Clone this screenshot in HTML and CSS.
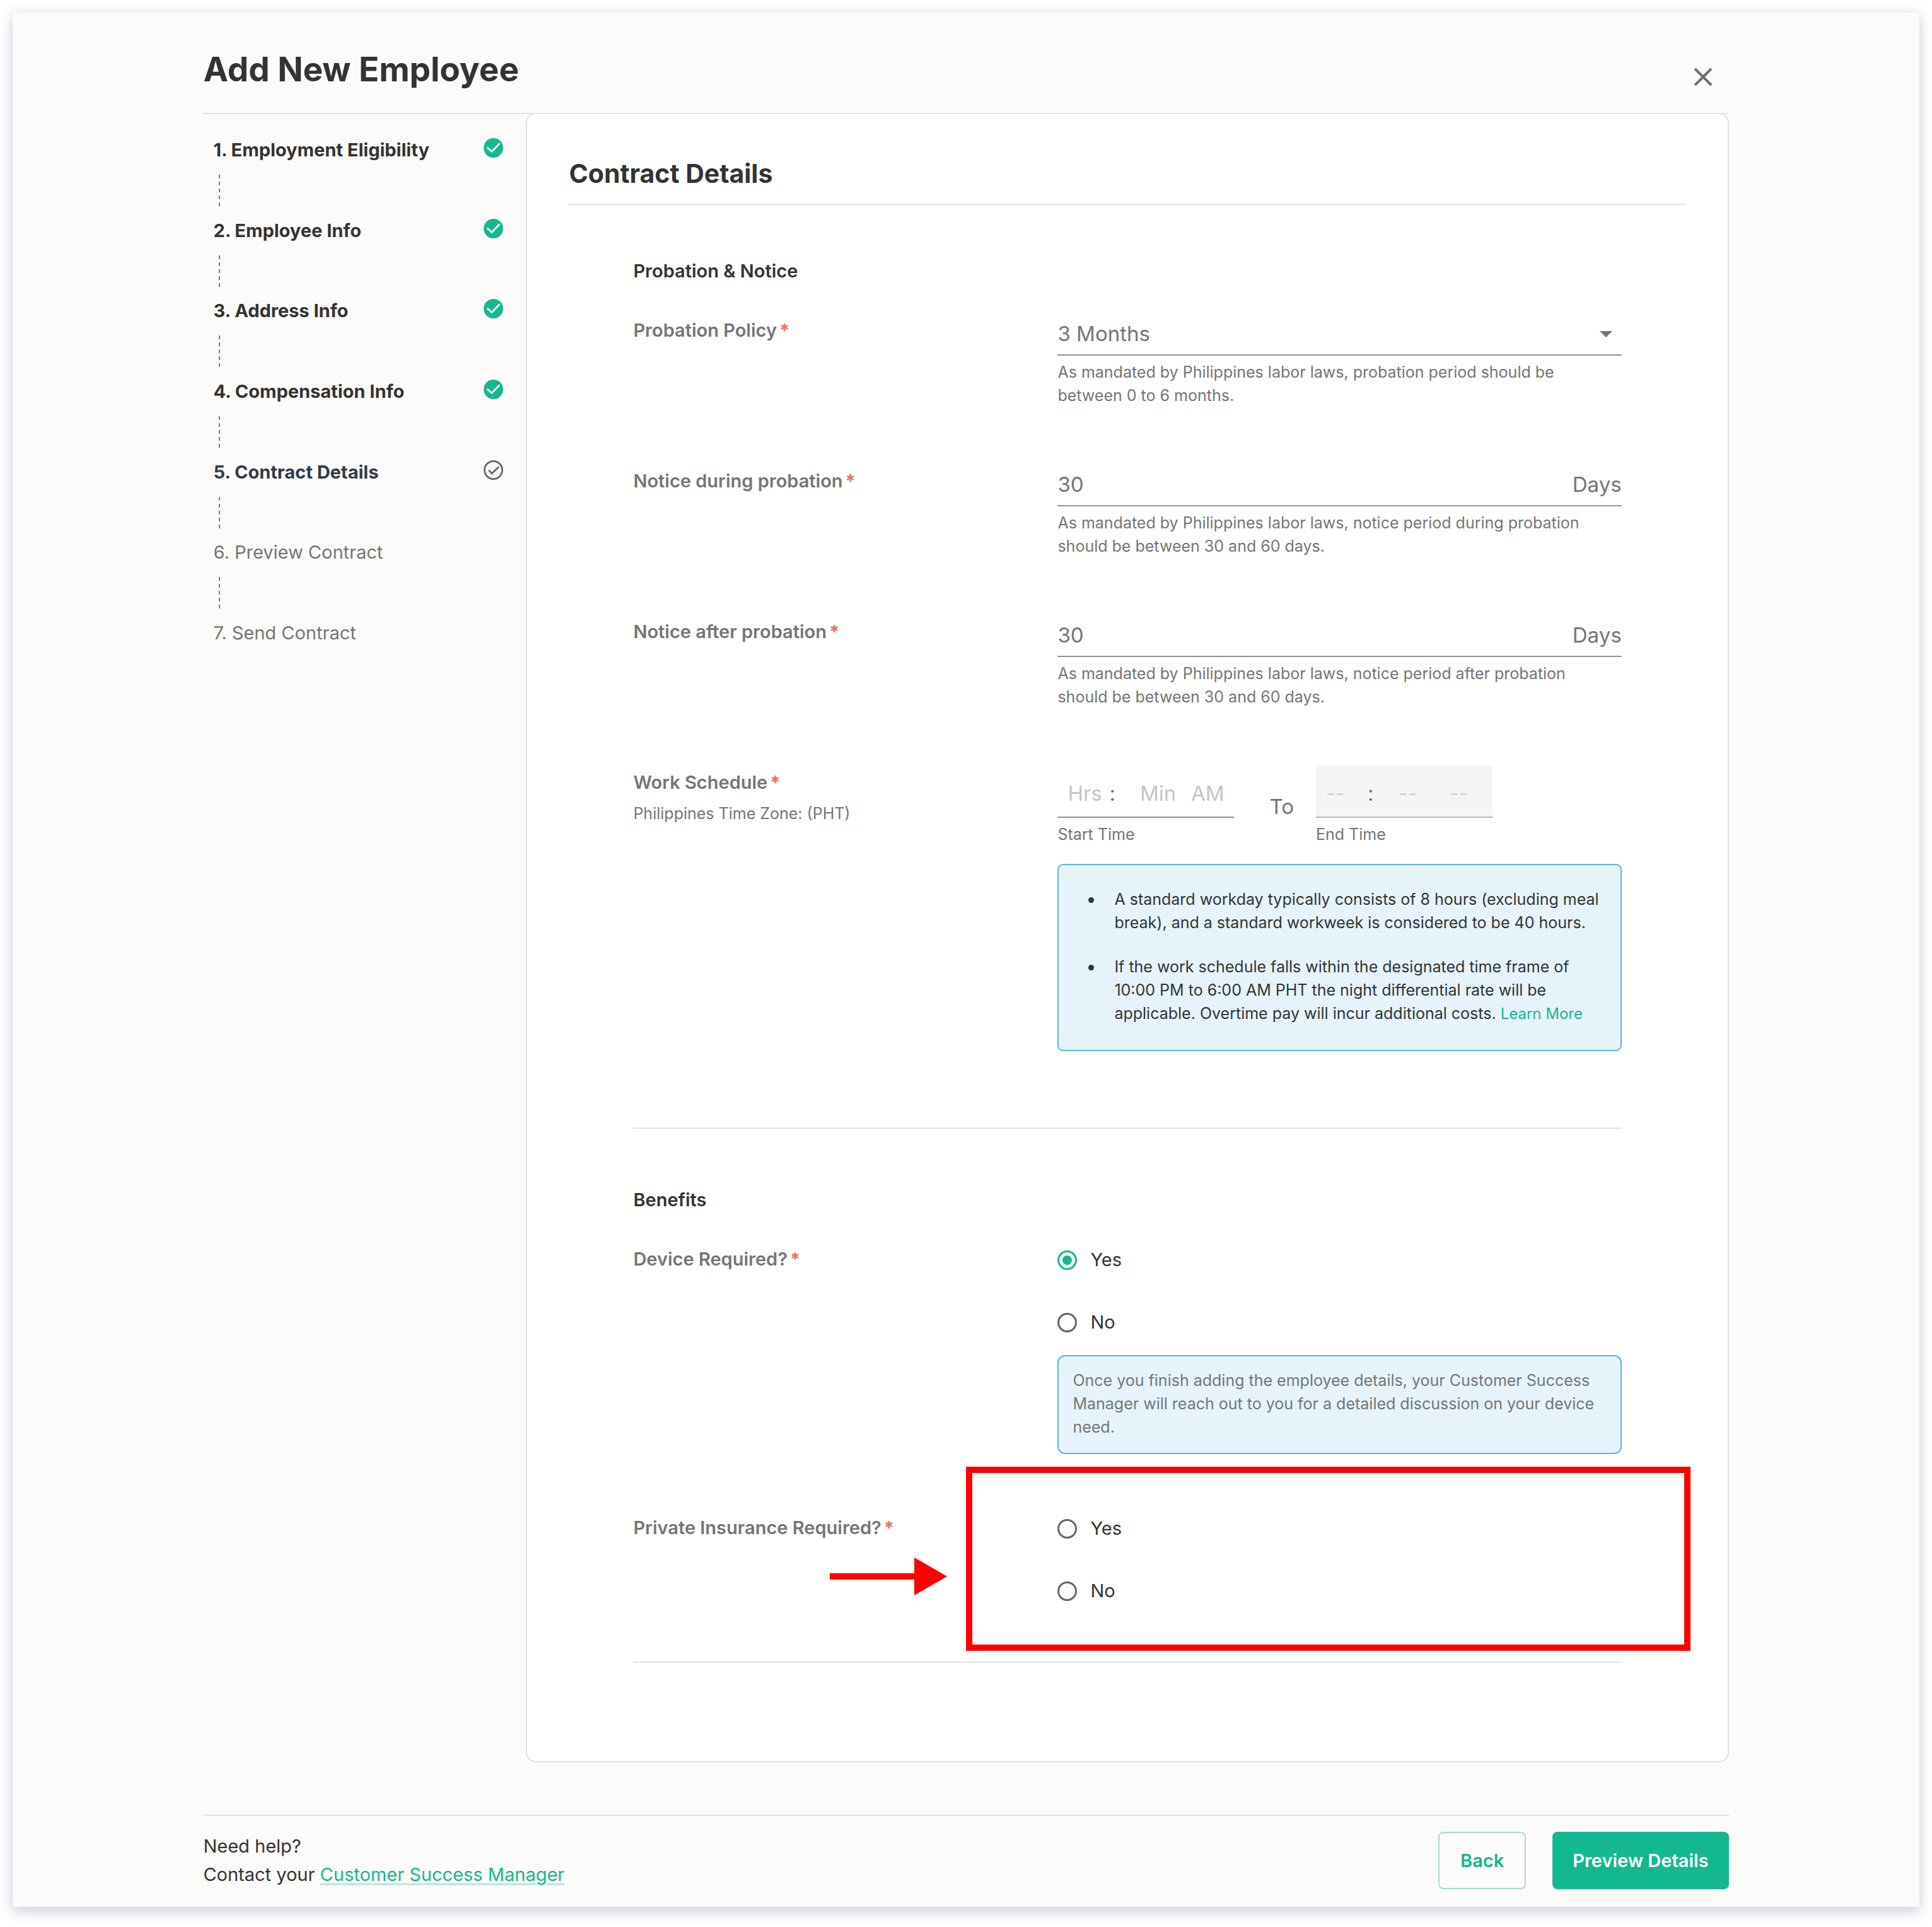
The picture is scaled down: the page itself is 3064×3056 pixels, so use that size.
FILE: index.html
```
<!DOCTYPE html>
<html lang="en">

<head>
  <meta charset="UTF-8" />
  <meta name="viewport" content="width=device-width, initial-scale=1.0" />
  <title>Add New Employee</title>
  <link rel="stylesheet" href="styles.css">
</head>

<body>
  <!-- Shared step icons -->
  <svg class="sprite" aria-hidden="true">
    <symbol id="icon-done" viewBox="0 0 24 24">
      <circle cx="12" cy="12" r="10" fill="currentColor" />
      <path d="M6.2 12.1l4.1 3.7 7.6-7.9" fill="none" stroke="#fff" stroke-width="1.8" stroke-linecap="round" />
    </symbol>
    <symbol id="icon-current" viewBox="0 0 24 24">
      <circle cx="12" cy="12" r="9.1" fill="none" stroke="currentColor" stroke-width="1.8" />
      <path d="M7.7 12.6l2.7 3 6.7-6.6" fill="none" stroke="currentColor" stroke-width="1.8" stroke-linecap="round" />
    </symbol>
  </svg>

  <div class="window">
    <div class="container">
      <header class="header">
        <h1>Add New Employee</h1>
        <button type="button" class="close" aria-label="Close">
          <svg viewBox="0 0 40 40"><path d="M7 7l26 26M33 7L7 33" /></svg>
        </button>
      </header>

      <div class="layout">
        <aside class="sidebar">
          <ol class="steps">
            <li class="done"><div class="step"><span>1. Employment Eligibility</span><svg><use href="#icon-done" /></svg></div></li>
            <li class="done"><div class="step"><span>2. Employee Info</span><svg><use href="#icon-done" /></svg></div></li>
            <li class="done"><div class="step"><span>3. Address Info</span><svg><use href="#icon-done" /></svg></div></li>
            <li class="done"><div class="step"><span>4. Compensation Info</span><svg><use href="#icon-done" /></svg></div></li>
            <li class="current"><div class="step"><span>5. Contract Details</span><svg><use href="#icon-current" /></svg></div></li>
            <li><div class="step"><span>6. Preview Contract</span></div></li>
            <li><div class="step"><span>7. Send Contract</span></div></li>
          </ol>
        </aside>

        <main class="card">
          <h2>Contract Details</h2>

          <form id="contractForm">
            <section>
              <h3>Probation &amp; Notice</h3>

              <div class="row">
                <div class="name">
                  <label for="policy">Probation Policy<span class="req">*</span></label>
                </div>
                <div>
                  <div class="control select">
                    <select id="policy">
                      <option>3 Months</option>
                    </select>
                    <svg viewBox="0 0 20 10"><path d="M0 0h20L10 10z" /></svg>
                  </div>
                  <p class="hint">As mandated by Philippines labor laws, probation period should be between 0 to 6 months.</p>
                </div>
              </div>

              <div class="row">
                <div class="name">
                  <label for="during">Notice during probation<span class="req">*</span></label>
                </div>
                <div>
                  <div class="control">
                    <input type="text" id="during" value="30">
                    <span>Days</span>
                  </div>
                  <p class="hint">As mandated by Philippines labor laws, notice period during probation should be between 30 and 60 days.</p>
                </div>
              </div>

              <div class="row">
                <div class="name">
                  <label for="after">Notice after probation<span class="req">*</span></label>
                </div>
                <div>
                  <div class="control">
                    <input type="text" id="after" value="30">
                    <span>Days</span>
                  </div>
                  <p class="hint">As mandated by Philippines labor laws, notice period after probation should be between 30 and 60 days.</p>
                </div>
              </div>

              <div class="row schedule">
                <div class="name">
                  <label for="startHours">Work Schedule<span class="req">*</span></label>
                  <p class="zone">Philippines Time Zone: (PHT)</p>
                </div>
                <div>
                  <div class="times">
                    <div>
                      <div class="time">
                        <input type="text" id="startHours" class="hours" placeholder="Hrs">
                        <span>:</span>
                        <input type="text" class="minutes" placeholder="Min" aria-label="Start minutes">
                        <input type="text" class="period" placeholder="AM" aria-label="Start period">
                      </div>
                      <p class="hint">Start Time</p>
                    </div>
                    <span class="to">To</span>
                    <div>
                      <div class="time disabled">
                        <input type="text" class="hours" placeholder="--" aria-label="End hours" disabled>
                        <span>:</span>
                        <input type="text" class="minutes" placeholder="--" aria-label="End minutes" disabled>
                        <input type="text" class="period" placeholder="--" aria-label="End period" disabled>
                      </div>
                      <p class="hint">End Time</p>
                    </div>
                  </div>
                  <ul class="info rules">
                    <li><p>A standard workday typically consists of 8 hours (excluding meal break), and a standard workweek is considered to be 40 hours.</p></li>
                    <li><p>If the work schedule falls within the designated time frame of 10:00 PM to 6:00 AM PHT the night differential rate will be applicable. Overtime pay will incur additional costs. <a href="#">Learn More</a></p></li>
                  </ul>
                </div>
              </div>
            </section>

            <section>
              <h3>Benefits</h3>

              <div class="row" role="radiogroup" aria-labelledby="deviceLabel">
                <div class="name" id="deviceLabel">Device Required?<span class="req">*</span></div>
                <div>
                  <div class="radios">
                    <label><input type="radio" name="device" checked> Yes</label>
                    <label><input type="radio" name="device"> No</label>
                  </div>
                  <p class="info">Once you finish adding the employee details, your Customer Success Manager will reach out to you for a detailed discussion on your device need.</p>
                </div>
              </div>

              <div class="row" role="radiogroup" aria-labelledby="insuranceLabel">
                <div class="name" id="insuranceLabel">Private Insurance Required?<span class="req">*</span></div>
                <div class="marked">
                  <div class="radios">
                    <label><input type="radio" name="insurance"> Yes</label>
                    <label><input type="radio" name="insurance"> No</label>
                  </div>
                  <div class="highlight"></div>
                  <svg class="arrow" viewBox="0 0 186 60"><path d="M0 25h134V0l52 30-52 30V35H0z" /></svg>
                </div>
              </div>
            </section>
          </form>
        </main>
      </div>

      <footer class="footer">
        <p>Need help?<br>Contact your <a href="#">Customer Success Manager</a></p>
        <div class="actions">
          <button type="button" class="btn">Back</button>
          <button type="submit" form="contractForm" class="btn primary">Preview Details</button>
        </div>
      </footer>
    </div>
  </div>
</body>

</html>
```
FILE: styles.css
```
:root {
  --green: #14b890;
  --text: #333;
  --muted: #757575;
  --line: #e2e2e2;
  --page: #fcfbf9;
}

* {
  box-sizing: border-box;
}

body {
  margin: 0;
  padding: 20px 20px 32px;
  background: #fff;
  color: var(--text);
  font-family: Inter, Roboto, sans-serif;
  font-size: 29px;
  line-height: 36px;
}

h1, h2, h3, p, ol, ul {
  margin: 0;
  padding: 0;
  list-style: none;
}

p {
  font-weight: 400;
}

a {
  color: var(--green);
  text-decoration: none;
}

input, select, button {
  margin: 0;
  padding: 0;
  border: none;
  background: none;
  color: inherit;
  font: inherit;
}

.sprite {
  display: none;
}

.window {
  background: var(--page);
  box-shadow: 0 0 16px rgba(90, 110, 170, 0.16), 0 10px 20px rgba(60, 80, 110, 0.18);
}

.container {
  width: 80%;
  margin: 0 auto;
}

/* Header */
.header {
  display: flex;
  justify-content: space-between;
  align-items: flex-end;
  padding: 58px 21px 37px 0;
  border-bottom: 2px solid var(--line);
}

h1 {
  font-size: 53px;
  line-height: 64px;
}

.close {
  width: 40px;
  height: 40px;
  cursor: pointer;
}

.close svg {
  display: block;
  fill: none;
  stroke: #6f6f6f;
  stroke-width: 4;
}

.layout {
  display: flex;
}

/* Steps */
.sidebar {
  flex: 0 0 512px;
  padding: 35px 33px 0 16px;
}

.steps {
  display: flex;
  flex-direction: column;
  justify-content: space-between;
  height: 810px;
  color: var(--muted);
}

.step {
  display: flex;
  justify-content: space-between;
  align-items: flex-start;
  line-height: 44px;
}

.step svg {
  width: 37px;
  height: 37px;
}

.steps li:not(:last-child)::after {
  content: "";
  display: block;
  width: 2px;
  height: 50px;
  margin: 17px 0 0 9px;
  background: repeating-linear-gradient(#7d7d7d 0 6px, transparent 6px 11px);
}

.done, .current {
  font-weight: 700;
}

.done {
  color: var(--text);
}

.done svg {
  color: var(--green);
}

.current {
  color: #303b4b;
}

.current svg {
  color: #666;
}

/* Card */
.card {
  flex: 1;
  margin-top: -2px;
  padding: 66px;
  padding-bottom: 0;
  background: #fff;
  border: 2px solid var(--line);
  border-radius: 16px;
}

h2 {
  padding-bottom: 20px;
  border-bottom: 2px solid var(--line);
  font-size: 41px;
  line-height: 56px;
}

form {
  padding: 87px 102px 156px;
}

section {
  padding-bottom: 121px;
  border-bottom: 2px solid var(--line);
}

section + section {
  padding: 95px 0 92px;
}

h3 {
  margin-bottom: 57px;
  font-size: 29px;
  font-weight: 600;
  line-height: 36px;
}

.row {
  display: grid;
  grid-template-columns: 673px 1fr;
}

.row + .row {
  margin-top: 98px;
}

.name {
  color: var(--muted);
  font-weight: 600;
  line-height: 38px;
}

.req {
  margin-left: 4px;
  color: #e66f66;
  font-weight: 700;
}

.control {
  display: flex;
  height: 59px;
  padding-bottom: 8px;
  border-bottom: 2px solid #949494;
  color: var(--muted);
  font-size: 33px;
  line-height: 49px;
}

.control input {
  flex: 1;
  min-width: 0;
}

.select {
  display: grid;
}

.select select,
.select svg {
  grid-area: 1 / 1;
}

.select select {
  appearance: none;
}

.select svg {
  width: 20px;
  height: 10px;
  margin-right: 15px;
  align-self: center;
  justify-self: end;
  fill: currentColor;
  pointer-events: none;
}

.hint, .zone, .info {
  font-size: 25px;
  line-height: 37px;
}

.hint {
  margin-top: 8px;
  padding-right: 20px;
  color: var(--muted);
}

/* Work schedule */
.row.schedule {
  margin-top: 90px;
}

.schedule .name {
  padding-top: 8px;
}

.zone {
  margin-top: 12px;
}

.times {
  display: flex;
}

.time {
  display: flex;
  align-items: center;
  width: 280px;
  height: 83px;
  padding: 7px 0 0 16px;
  border-bottom: 2px solid #949494;
  color: var(--muted);
  font-size: 33px;
}

.time input::placeholder {
  color: #c4c4c4;
  opacity: 1;
}

.time .hours {
  width: 66px;
}

.time .minutes {
  width: 120px;
  padding-left: 39px;
}

.time .period {
  flex: 1;
  min-width: 0;
}

.time.disabled {
  background: #f5f5f5;
  border-color: #b5b5b5;
}

.time.disabled input::placeholder {
  color: #d6d6d6;
}

.to {
  margin: 45px 35px 0 56px;
  color: var(--muted);
  font-size: 33px;
  line-height: 40px;
}

.info {
  margin-top: 32px;
  padding: 20px 22px 22px;
  background: #e6f3fb;
  border: 2px solid #5fb2ee;
  border-radius: 12px;
  color: var(--muted);
}

.rules {
  margin-top: 28px;
  padding: 36px 22px 39px 47px;
  border-radius: 9px;
  color: var(--text);
}

.rules li {
  display: flex;
}

.rules li + li {
  margin-top: 33px;
}

.rules li::before {
  content: "";
  flex: none;
  width: 9px;
  height: 9px;
  margin: 15px 32px 0 0;
  border-radius: 50%;
  background: currentColor;
}

.rules a {
  font-size: 24px;
}

/* Benefits */
.radios {
  display: flex;
  flex-direction: column;
  align-items: flex-start;
  gap: 59px;
}

.radios label {
  display: flex;
  align-items: center;
  gap: 21px;
  line-height: 40px;
}

.radios input {
  appearance: none;
  width: 31px;
  height: 31px;
  border: 3px solid #666;
  border-radius: 50%;
}

.radios input:checked {
  border-color: var(--green);
  background: radial-gradient(circle, var(--green) 7px, transparent 8px);
}

.marked {
  position: relative;
}

.highlight {
  position: absolute;
  inset: -78px -109px -75px -145px;
  border: 10px solid #f00;
  pointer-events: none;
}

.arrow {
  position: absolute;
  top: 66px;
  left: -361px;
  width: 186px;
  fill: #f00;
}

/* Footer */
.footer {
  display: flex;
  justify-content: space-between;
  margin-top: 83px;
  padding: 25px 0 28px;
  border-top: 2px solid var(--line);
}

.footer p {
  line-height: 45px;
}

.footer a {
  text-decoration: underline 2px #a3dfcd;
  text-underline-offset: 4px;
}

.actions {
  display: flex;
  gap: 42px;
}

.btn {
  height: 91px;
  padding: 0 33px;
  border: 2px solid #a3dfcd;
  border-radius: 8px;
  color: var(--green);
  font-weight: 600;
  cursor: pointer;
}

.primary {
  padding: 0 30px;
  border-color: var(--green);
  background: var(--green);
  color: #fff;
}
```
